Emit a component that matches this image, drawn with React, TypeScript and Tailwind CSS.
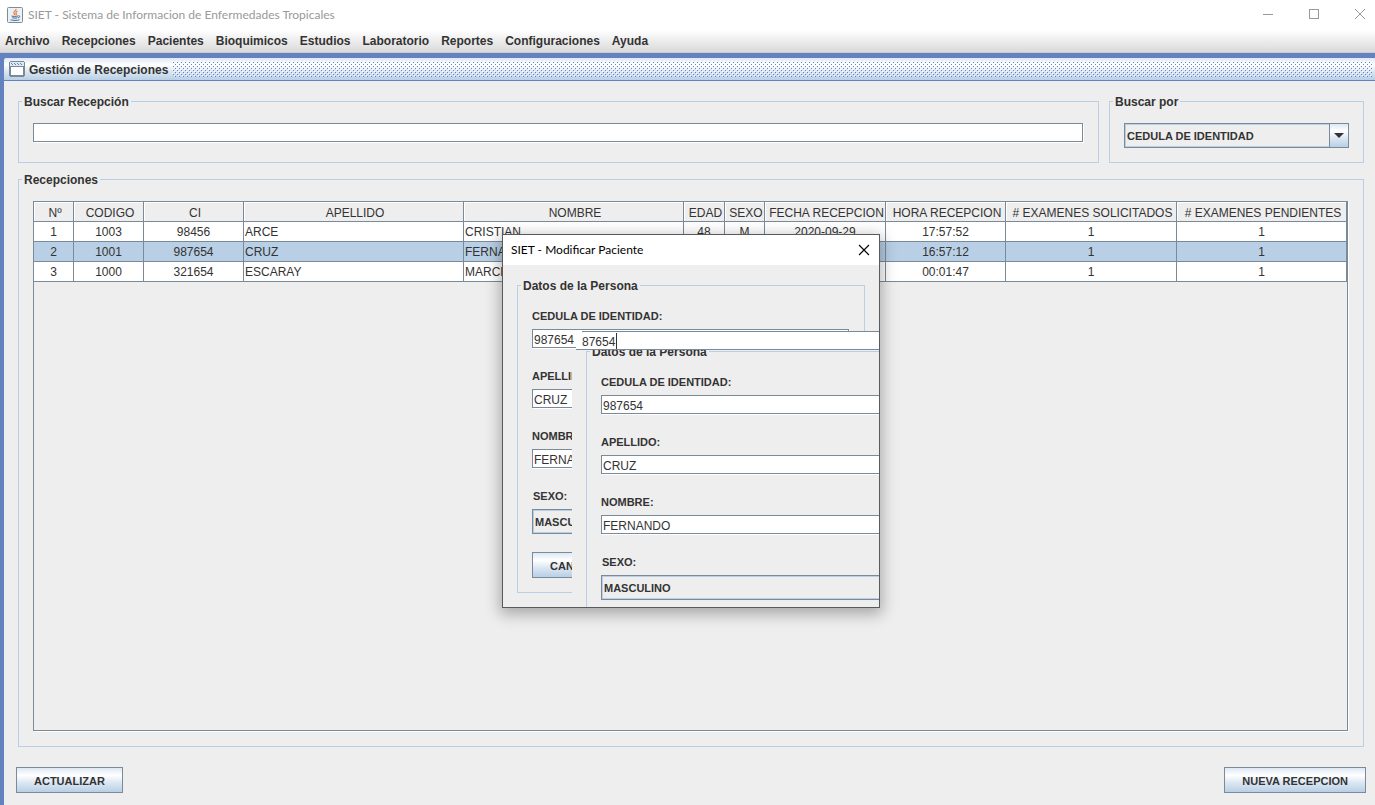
import type { ReactNode } from "react";

const MENUS = [
  "Archivo",
  "Recepciones",
  "Pacientes",
  "Bioquimicos",
  "Estudios",
  "Laboratorio",
  "Reportes",
  "Configuraciones",
  "Ayuda",
];

const COLUMNS = [
  { label: "Nº", width: "w-[40px]" },
  { label: "CODIGO", width: "w-[70px]" },
  { label: "CI", width: "w-[100px]" },
  { label: "APELLIDO", width: "w-[220px]" },
  { label: "NOMBRE", width: "w-[220px]" },
  { label: "EDAD", width: "w-[41px]" },
  { label: "SEXO", width: "w-[40px]" },
  { label: "FECHA RECEPCION", width: "w-[121px]" },
  { label: "HORA RECEPCION", width: "w-[120px]" },
  { label: "# EXAMENES SOLICITADOS", width: "w-[171px]" },
  { label: "# EXAMENES PENDIENTES", width: "w-[170px]" },
];

const ROWS = [
  ["1", "1003", "98456", "ARCE", "CRISTIAN", "48", "M", "2020-09-29", "17:57:52", "1", "1"],
  ["2", "1001", "987654", "CRUZ", "FERNANDO", "", "", "", "16:57:12", "1", "1"],
  ["3", "1000", "321654", "ESCARAY", "MARCELO", "", "", "", "00:01:47", "1", "1"],
];

const SELECTED_ROW = 1;

const METAL =
  "bg-[linear-gradient(to_bottom,#dde8f3_0%,#ffffff_30%,#dde8f3_60%,#b8cfe5_100%)]";
const FIELD =
  "h-[19px] w-full border border-[#7a8a99] bg-white px-px pt-[3px] text-[12px] leading-4 text-[#333] shadow-[1px_1px_0_0_#fff] outline-none";

function JavaIcon() {
  return (
    <svg className="h-4 w-4" viewBox="0 0 16 16" aria-hidden>
      <rect x="0.5" y="0.5" width="15" height="15" rx="1" fill="#eef1f4" stroke="#7d8c99" />
      <path
        d="M9 2c.8 1.600-3 2.200-2.200 4 .4.800 1.200 1 .9 2.200M10.500 4.300c-1.600.6-2 1.300-1.300 2.200.4.600.2 1-.3 1.500"
        fill="none"
        stroke="#e8762d"
        strokeWidth="1.2"
      />
      <path
        d="M4.500 9c1.500.5 5 .5 6.500 0M5.200 10.800c1.500.4 4 .4 5.300 0M3.500 12.800c2 .8 7 .8 9 0M11.300 8.800c2-.4 2 1.600-.3 2.100"
        fill="none"
        stroke="#3f6a8f"
      />
    </svg>
  );
}

function FrameIcon() {
  return (
    <svg className="h-4 w-4" viewBox="0 0 16 16" shapeRendering="crispEdges" aria-hidden>
      <path d="M1 0h14v1h1v14h-1v1H1v-1H0V1h1z" fill="#7a8a99" />
      <rect x="1" y="1" width="14" height="4" fill="#dde8f3" />
      <path
        d="M2 2.500h1m2 0h1m2 0h1m2 0h1M3 3.500h1m2 0h1m2 0h1m2 0h1"
        stroke="#6382bf"
      />
      <rect x="2" y="6" width="12" height="8" fill="#fff" />
    </svg>
  );
}

function Bumps() {
  return (
    <svg className="h-4 w-full" shapeRendering="crispEdges" aria-hidden>
      <defs>
        <pattern id="bumps" width="4" height="4" patternUnits="userSpaceOnUse">
          <rect x="0" y="0" width="1" height="1" fill="#fff" />
          <rect x="1" y="1" width="1" height="1" fill="#6382bf" />
          <rect x="2" y="2" width="1" height="1" fill="#fff" />
          <rect x="3" y="3" width="1" height="1" fill="#6382bf" />
        </pattern>
      </defs>
      <rect width="100%" height="100%" fill="url(#bumps)" />
    </svg>
  );
}

function Group({
  title,
  className,
  children,
}: {
  title: string;
  className: string;
  children: ReactNode;
}) {
  return (
    <fieldset className={`min-w-0 border border-[#b8cfe5] ${className}`}>
      <legend className="-ml-[11px] px-[2px] pt-[2px] text-[12px] leading-4 font-bold">
        {title}
      </legend>
      {children}
    </fieldset>
  );
}

function Combo({ id, label, options }: { id: string; label: string; options: string[] }) {
  return (
    <div className="relative h-[25px] border border-[#7a8a99]">
      <select
        id={id}
        aria-label={label}
        className="block h-full w-full appearance-none border border-[#b8cfe5] bg-[#eee] pl-px text-[11px] leading-4 font-bold text-[#333] outline-none"
      >
        {options.map((option) => (
          <option key={option}>{option}</option>
        ))}
      </select>
      <span
        className={`pointer-events-none absolute inset-y-0 right-0 flex w-[19px] items-center justify-center border-l border-[#7a8a99] ${METAL}`}
      >
        <svg className="h-[5px] w-[10px]" viewBox="0 0 10 5" aria-hidden>
          <path d="M0 0h10L5 5z" fill="#333" />
        </svg>
      </span>
    </div>
  );
}

function MetalButton({ className = "", children }: { className?: string; children: ReactNode }) {
  return (
    <button
      type="button"
      className={`h-[26px] border border-[#7a8a99] px-[17px] pt-[2px] text-[11px] leading-4 font-bold ${METAL} ${className}`}
    >
      {children}
    </button>
  );
}

function PatientForm({ prefix, actions }: { prefix: string; actions?: ReactNode }) {
  const fields = [
    { id: "ci", label: "CEDULA DE IDENTIDAD:", value: "987654" },
    { id: "apellido", label: "APELLIDO:", value: "CRUZ" },
    { id: "nombre", label: "NOMBRE:", value: "FERNANDO" },
  ];

  return (
    <form className="w-[376px] px-[14px] pt-[11px]">
      <Group title="Datos de la Persona" className="pt-[14px] pr-[15px] pb-[14px] pl-[14px]">
        {fields.map((field) => (
          <div key={field.id} className="mb-5">
            <label
              htmlFor={`${prefix}-${field.id}`}
              className="mb-[5px] block text-[11px] leading-4 font-bold"
            >
              {field.label}
            </label>
            <input
              id={`${prefix}-${field.id}`}
              className={`block ${FIELD}`}
              defaultValue={field.value}
            />
          </div>
        ))}
        <label
          htmlFor={`${prefix}-sexo`}
          className="mb-[5px] block pl-px text-[11px] leading-4 font-bold"
        >
          SEXO:
        </label>
        <Combo id={`${prefix}-sexo`} label="SEXO" options={["MASCULINO", "FEMENINO"]} />
        {actions}
      </Group>
    </form>
  );
}

function PatientDialog() {
  return (
    <div
      role="dialog"
      aria-label="SIET - Modificar Paciente"
      className="absolute top-[234px] left-[502px] flex h-[374px] w-[378px] flex-col border border-[#5a5a5a] bg-[#eee] shadow-[0_4px_14px_2px_rgba(0,0,0,0.3)]"
    >
      <div className="flex h-[30px] shrink-0 items-center justify-between bg-white pr-[9px] pl-2">
        <h2 className="font-[Lato,sans-serif] text-[12px] leading-4 text-black">
          SIET - Modificar Paciente
        </h2>
        <button type="button" aria-label="Cerrar">
          <svg className="h-3 w-3" viewBox="0 0 12 12" aria-hidden>
            <path d="M1 1l10 10M11 1L1 11" stroke="#000" strokeWidth="1.1" />
          </svg>
        </button>
      </div>
      <div className="relative flex-1 overflow-hidden">
        <PatientForm
          prefix="base"
          actions={<MetalButton className="mt-[18px]">CANCELAR</MetalButton>}
        />
        {/* second copy of the form, overlapping the first */}
        <div className="absolute top-[85px] right-0 bottom-0 left-[69px] overflow-hidden bg-[#eee]">
          <div className="-mt-[19px]">
            <PatientForm prefix="top" />
          </div>
        </div>
        <div className="absolute top-[66px] right-0 left-[73px] flex h-[19px]">
          <span className="w-[6px] border-b border-[#7a8a99] bg-white" />
          <input
            aria-label="CEDULA DE IDENTIDAD"
            className="min-w-0 flex-1 border-y border-[#7a8a99] bg-white pt-[3px] text-[12px] leading-4 text-[#333] outline-none"
            defaultValue="87654"
          />
          <span className="absolute top-[2px] left-[40px] h-4 w-px bg-[#333]" />
        </div>
      </div>
    </div>
  );
}

export default function App() {
  return (
    <div className="relative flex min-h-screen flex-col bg-[#eee] font-['Liberation_Sans',Arial,sans-serif] text-[12px] leading-4 text-[#333]">
      <header className="flex h-[30px] items-center justify-between bg-white pr-[9px] pl-[7px]">
        <div className="flex items-center gap-[5px]">
          <JavaIcon />
          <h1 className="font-[Lato,sans-serif] text-[12px] leading-4 text-[#999]">
            SIET - Sistema de Informacion de Enfermedades Tropicales
          </h1>
        </div>
        <div className="flex items-center gap-[34px] text-[#999]">
          <button type="button" aria-label="Minimizar">
            <svg className="h-3 w-3" viewBox="0 0 12 12" aria-hidden>
              <path d="M1 5.500h10" stroke="currentColor" />
            </svg>
          </button>
          <button type="button" aria-label="Maximizar">
            <svg className="h-3 w-3" viewBox="0 0 12 12" aria-hidden>
              <rect x="1.500" y="0.500" width="9" height="9" fill="none" stroke="currentColor" />
            </svg>
          </button>
          <button type="button" aria-label="Cerrar">
            <svg className="h-3 w-3" viewBox="0 0 12 12" aria-hidden>
              <path d="M1 0l10 10M11 0L1 10" stroke="currentColor" />
            </svg>
          </button>
        </div>
      </header>

      <nav className="flex h-[23px] items-center gap-3 border-b border-[#ccc] bg-linear-to-b from-white to-[#dadada] pl-[5px]">
        {MENUS.map((menu) => (
          <button key={menu} type="button" className="font-bold">
            {menu}
          </button>
        ))}
      </nav>

      <main className="flex flex-1 flex-col bg-[#6382bf] pt-[5px] pl-1">
        <div
          className={`flex h-[23px] items-center gap-1 rounded-tl-[2px] border-b border-[#6382bf] pr-[3px] pl-[5px] ${METAL}`}
        >
          <FrameIcon />
          <h2 className="shrink-0 pt-[2px] font-bold">Gestión de Recepciones</h2>
          <div className="min-w-0 flex-1">
            <Bumps />
          </div>
        </div>

        <div className="flex flex-1 flex-col bg-[#eee] pt-[11px] pr-[11px] pl-[14px]">
          <div className="flex gap-[10px]">
            <Group title="Buscar Recepción" className="flex-1 pt-[13px] pr-[15px] pb-[14px] pl-[14px]">
              <input aria-label="Buscar Recepción" className={`block ${FIELD}`} />
            </Group>
            <Group title="Buscar por" className="w-[255px] px-[14px] pt-[13px] pb-[14px]">
              <Combo
                id="buscar-por"
                label="Buscar por"
                options={["CEDULA DE IDENTIDAD", "APELLIDO", "NOMBRE"]}
              />
            </Group>
          </div>

          <section className="mt-4 flex flex-1 flex-col border border-[#b8cfe5] pr-[15px] pb-[15px] pl-[14px]">
            <h3 className="-mt-2 mb-[13px] -ml-[11px] self-start bg-[#eee] px-[2px] font-bold">
              Recepciones
            </h3>
            <div className="flex-1 border border-[#7a8a99] shadow-[1px_1px_0_0_#fff]">
              <table className="w-full table-fixed border-separate border-spacing-0">
                <thead>
                  <tr>
                    {COLUMNS.map((column) => (
                      <th
                        key={column.label}
                        className={`h-5 overflow-hidden border-r border-b border-[#7a8a99] pt-[2px] pr-0 pb-0 pl-[3px] text-center font-normal whitespace-nowrap shadow-[inset_1px_1px_0_0_#fff] ${column.width}`}
                      >
                        {column.label}
                      </th>
                    ))}
                  </tr>
                </thead>
                <tbody>
                  {ROWS.map((row, rowIndex) => (
                    <tr
                      key={row[0]}
                      className={rowIndex === SELECTED_ROW ? "bg-[#b8cfe5]" : "bg-white"}
                    >
                      {row.map((cell, index) => (
                        <td
                          key={COLUMNS[index].label}
                          className={`h-5 border-r border-b border-[#7a8a99] px-px py-0 whitespace-nowrap ${
                            index === 3 || index === 4 ? "text-left" : "text-center"
                          }`}
                        >
                          {cell}
                        </td>
                      ))}
                    </tr>
                  ))}
                </tbody>
              </table>
            </div>
          </section>

          <div className="-mr-[2px] mt-5 mb-3 -ml-[2px] flex justify-between">
            <MetalButton>ACTUALIZAR</MetalButton>
            <MetalButton>NUEVA RECEPCION</MetalButton>
          </div>
        </div>
      </main>

      <PatientDialog />
    </div>
  );
}
